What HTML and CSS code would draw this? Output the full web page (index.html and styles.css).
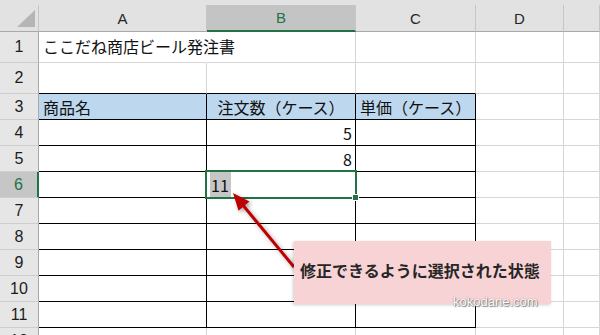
FILE: index.html
```html
<!DOCTYPE html>
<html lang="ja">
<head>
<meta charset="utf-8">
<link rel="stylesheet" href="styles.css">
</head>
<body>
<div class="strip"></div>
<div class="sheet">
  <div class="c ch corner"><span class="tri"></span></div>
  <div class="c ch">A</div>
  <div class="c ch sel">B</div>
  <div class="c ch">C</div>
  <div class="c ch">D</div>
  <div class="c ch"></div>

  <div class="c rh tall">1</div>
  <div class="c nr tall">ここだね商店ビール発注書</div>
  <div class="c"></div>
  <div class="c"></div>
  <div class="c"></div>
  <div class="c"></div>

  <div class="c rh tall">2</div>
  <div class="c top"></div>
  <div class="c top"></div>
  <div class="c top"></div>
  <div class="c"></div>
  <div class="c"></div>

  <div class="c rh">3</div>
  <div class="c tbl thd">商品名</div>
  <div class="c tbl thd mid">注文数（ケース）</div>
  <div class="c tbl thd">単価（ケース）</div>
  <div class="c"></div>
  <div class="c"></div>

  <div class="c rh">4</div>
  <div class="c tbl"></div>
  <div class="c tbl num">5</div>
  <div class="c tbl"></div>
  <div class="c"></div>
  <div class="c"></div>

  <div class="c rh">5</div>
  <div class="c tbl"></div>
  <div class="c tbl num">8</div>
  <div class="c tbl"></div>
  <div class="c"></div>
  <div class="c"></div>

  <div class="c rh sel">6</div>
  <div class="c tbl"></div>
  <div class="c tbl active"><span class="hl">11</span><span class="handle"></span></div>
  <div class="c tbl"></div>
  <div class="c"></div>
  <div class="c"></div>

  <div class="c rh">7</div>
  <div class="c tbl"></div>
  <div class="c tbl"></div>
  <div class="c tbl"></div>
  <div class="c"></div>
  <div class="c"></div>

  <div class="c rh">8</div>
  <div class="c tbl"></div>
  <div class="c tbl"></div>
  <div class="c tbl"></div>
  <div class="c"></div>
  <div class="c"></div>

  <div class="c rh">9</div>
  <div class="c tbl"></div>
  <div class="c tbl"></div>
  <div class="c tbl"></div>
  <div class="c"></div>
  <div class="c"></div>

  <div class="c rh">10</div>
  <div class="c tbl"></div>
  <div class="c tbl"></div>
  <div class="c tbl"></div>
  <div class="c"></div>
  <div class="c"></div>

  <div class="c rh">11</div>
  <div class="c tbl"></div>
  <div class="c tbl"></div>
  <div class="c tbl"></div>
  <div class="c"></div>
  <div class="c"></div>

  <div class="c rh">12</div>
  <div class="c"></div>
  <div class="c"></div>
  <div class="c"></div>
  <div class="c"></div>
  <div class="c"></div>
</div>

<svg class="arrow" width="600" height="335" viewBox="0 0 600 335">
  <line x1="294" y1="267" x2="242" y2="204" stroke="#c00000" stroke-width="3"/>
  <polygon points="233,193 249.5,201.5 238.5,210.8" fill="#c00000"/>
</svg>

<div class="callout">
  修正できるように選択された状態
  <span class="wm">kokodane.com</span>
</div>
</body>
</html>
```

FILE: styles.css
```css
body {
  margin: 0;
  width: 600px;
  height: 335px;
  overflow: hidden;
  position: relative;
  background: #fff;
  font-family: "Noto Sans CJK JP", sans-serif;
}

.strip {
  height: 5px;
  background: #e2e2e2;
}

.sheet {
  display: grid;
  grid-template-columns: 39px 168px 149px 120px 88px 1fr;
  grid-template-rows: 27px 31px 31px repeat(10, 26px);
}

.c {
  box-sizing: border-box;
  border-right: 1px solid #d6d6d6;
  border-bottom: 1px solid #d6d6d6;
  display: flex;
  align-items: center;
  padding: 0 4px;
  font-size: 16px;
  color: #111;
  white-space: nowrap;
  min-width: 0;
}

.tall {
  padding-bottom: 3px;
}

.ch {
  background: #e2e2e2;
  border-right-color: #c6c6c6;
  border-bottom-color: #a8a8a8;
  justify-content: center;
  font-family: "Liberation Sans", sans-serif;
  font-size: 15px;
  color: #262626;
  padding: 0;
}

.ch.sel {
  background: #c4c4c4;
  color: #217346;
  border-bottom: 2px solid #217346;
}

.corner {
  position: relative;
  border-right-color: #c6c6c6;
}

.tri {
  position: absolute;
  left: 17px;
  top: 5px;
  width: 18px;
  height: 17px;
  background: #b5b5b5;
  clip-path: polygon(100% 0, 100% 100%, 0 100%);
}

.rh {
  background: #e6e6e6;
  border-right-color: #a8a8a8;
  border-bottom-color: #cdcdcd;
  justify-content: center;
  font-family: "Liberation Sans", sans-serif;
  font-size: 16px;
  color: #1c1c1c;
  padding: 0;
}

.rh.sel {
  background: #c6c6c6;
  color: #217346;
  border-right: 2px solid #217346;
}

.nr {
  border-right-color: transparent;
}

.top {
  border-bottom-color: #000;
}

.tbl {
  border-right-color: #000;
  border-bottom-color: #000;
}

.thd {
  background: #bdd7ee;
}

.mid {
  justify-content: center;
}

.num {
  justify-content: flex-end;
  padding-right: 3px;
}

.active {
  position: relative;
  padding-left: 3px;
  align-items: stretch;
}

.active::before {
  content: "";
  position: absolute;
  left: -2px;
  top: -2px;
  right: -2px;
  bottom: -2px;
  border: 2px solid #217346;
}

.hl {
  display: flex;
  align-items: center;
  background: #c6c6c6;
  padding: 0 2px 0 1px;
}

.handle {
  position: absolute;
  right: -4px;
  bottom: -4px;
  width: 5px;
  height: 5px;
  background: #217346;
  border: 1px solid #fff;
}

.arrow {
  position: absolute;
  left: 0;
  top: 0;
  pointer-events: none;
  filter: drop-shadow(2px 2px 2px rgba(0, 0, 0, 0.35));
}

.callout {
  position: absolute;
  left: 294px;
  top: 241px;
  width: 257px;
  height: 63px;
  box-sizing: border-box;
  background: #f8d3d5;
  box-shadow: -1px 1px 3px rgba(0, 0, 0, 0.2);
  display: flex;
  align-items: center;
  padding: 0 0 5px 6px;
  font-size: 16px;
  font-weight: bold;
  color: #262626;
  white-space: nowrap;
}

.wm {
  position: absolute;
  left: 159px;
  top: 54px;
  font-family: "Liberation Sans", sans-serif;
  font-size: 13px;
  font-weight: normal;
  line-height: 14px;
  color: #fff;
  text-shadow: 0 0 1px #666, 1px 1px 1px #888;
}
```
